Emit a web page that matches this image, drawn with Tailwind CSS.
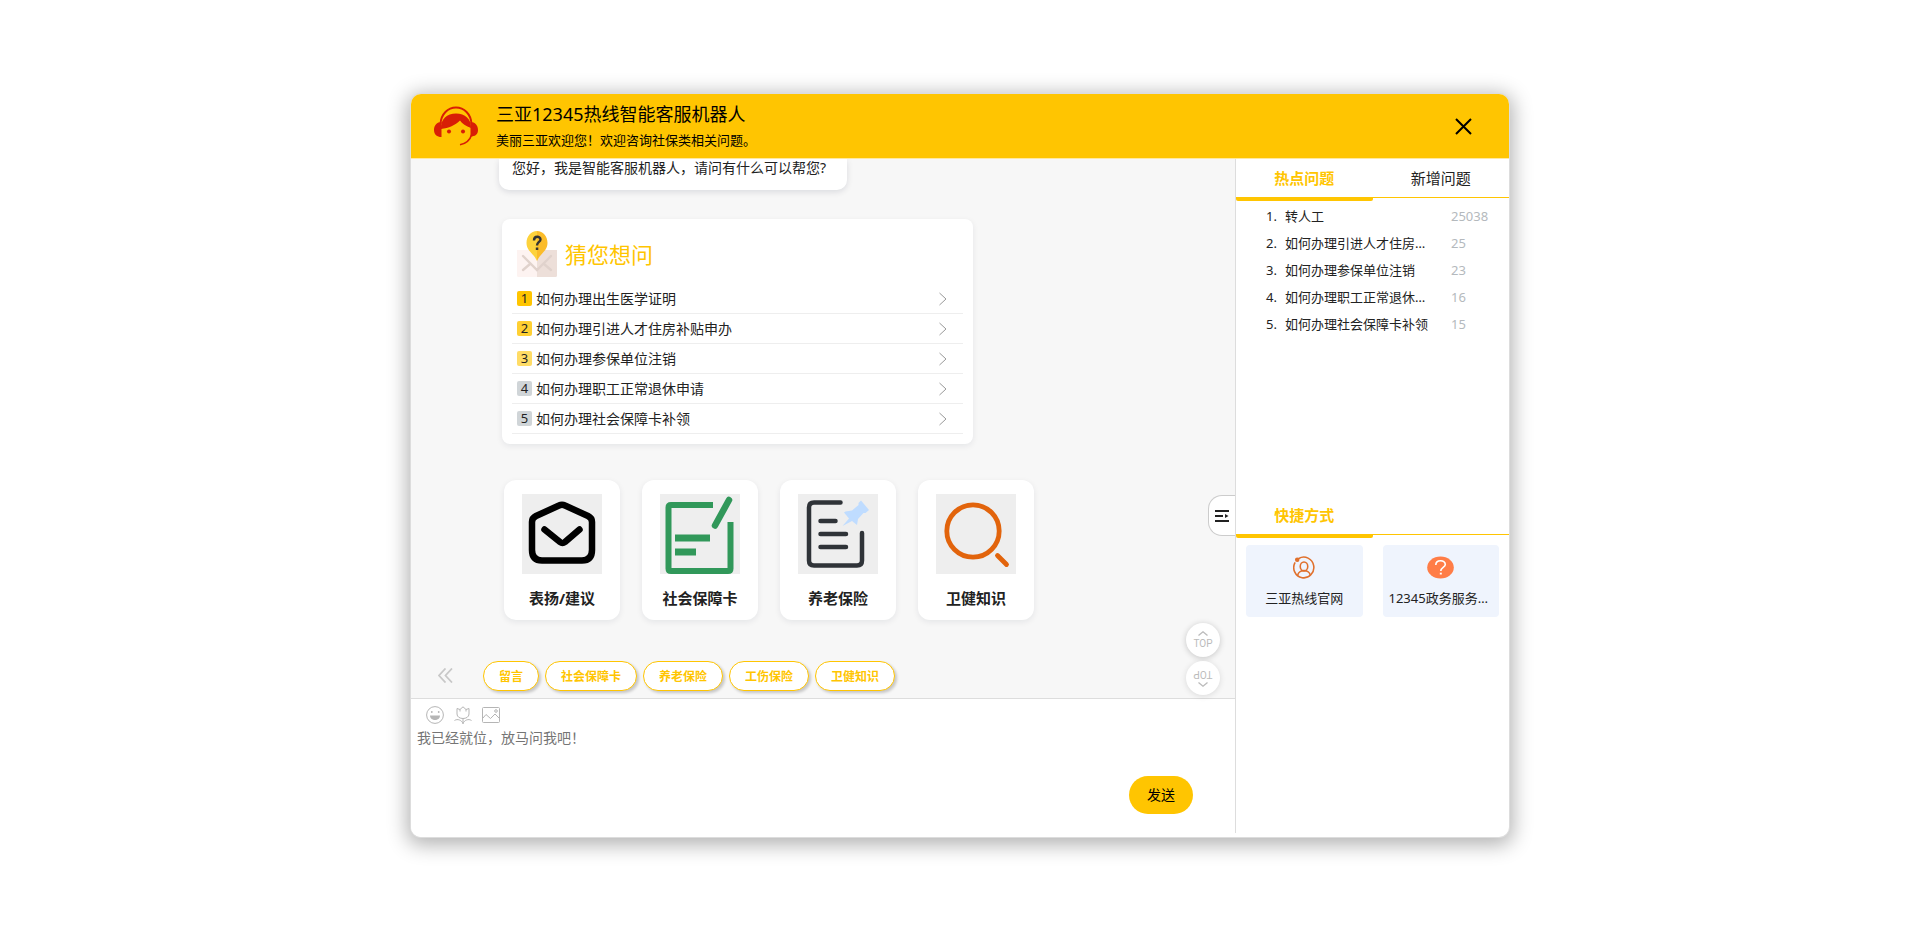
<!DOCTYPE html>
<html lang="zh-CN">
<head>
<meta charset="utf-8">
<title>三亚12345热线智能客服机器人</title>
<script src="https://cdn.jsdelivr.net/npm/@tailwindcss/browser@4"></script>
</head>
<body class="flex h-screen justify-center bg-white px-4 py-[94px] font-['Noto_Sans','Noto_Sans_CJK_SC',sans-serif] text-sm text-[#222]">
<div class="flex w-full max-w-[1098px] flex-col overflow-hidden rounded-[10px] bg-white shadow-[0_0_0_1px_#ddd,0_4px_20px_4px_rgba(0,0,0,0.3)]">

  <header class="flex h-16 shrink-0 items-center bg-[#ffc501] pl-[23px] text-black">
    <svg class="h-[40px] w-[44px] shrink-0" viewBox="0 0 44 40" fill="none" aria-hidden="true">
      <path d="M6.500 18C7 8 14 1.500 22 1.500S37 8 37.500 18" stroke="#d81e06" stroke-width="2"/>
      <path d="M7 23C6.500 13 13 7.500 22 7.500S37.500 13 37 22C32 20.500 28 17.500 26 14.500 21 19.500 15 22 7 23Z" fill="#d81e06"/>
      <path d="M7.500 16v15C3 31 0 28.500 0 24s3-8 7.500-8ZM36.500 16v14.500C41 30.500 44 28.500 44 24s-3-8-7.500-8Z" fill="#d81e06"/>
      <circle cx="15" cy="25.500" r="2" fill="#d81e06"/><circle cx="29" cy="25.500" r="2" fill="#d81e06"/>
      <path d="M37.500 29c-1.500 5-5.500 8.500-11.500 9.800" stroke="#d81e06" stroke-width="1.600"/>
    </svg>
    <div class="ml-[18px] flex-1">
      <h1 class="text-lg leading-7">三亚12345热线智能客服机器人</h1>
      <p class="text-[13px] leading-6">美丽三亚欢迎您！欢迎咨询社保类相关问题。</p>
    </div>
    <button class="mr-[37px] p-0" aria-label="关闭"><svg class="size-[17px]" viewBox="0 0 17 17" stroke="#000" stroke-width="2"><path d="M1 1l15 15M16 1L1 16"/></svg></button>
  </header>

  <div class="flex min-h-0 flex-1 border-t border-[#ffe9a0]">
    <main class="relative flex min-w-0 flex-1 flex-col">
      <div class="flex min-h-0 flex-1 flex-col items-start overflow-hidden bg-[#f7f7f7]">
        <div class="ml-[88px] rounded-b-[10px] bg-white pr-[21px] pb-[13px] pl-[13px] leading-[18px] shadow-[0_2px_6px_rgba(0,20,50,0.12)]">您好，我是智能客服机器人，请问有什么可以帮您?</div>

        <section class="mt-[29px] ml-[91px] w-[471px] rounded-lg bg-white px-2.5 pt-3 pb-2.5 shadow-[0_2px_6px_rgba(0,20,50,0.08)]">
          <div class="mb-[7px] flex items-center gap-2 pl-[5px]">
            <svg class="h-[46px] w-10" viewBox="0 0 40 46" fill="none" aria-hidden="true">
              <path d="M0 19h20v27H1.500Q0 46 0 44.500Z" fill="#fdf3f1"/><path d="M20 19h20v25.500q0 1.500-1.500 1.500H20Z" fill="#eddfd9"/>
              <path d="M6 25l14 14 14-14M6 39l7-6M34 39l-7-6" stroke="#e0d2cc" stroke-width="2.400" stroke-linecap="round"/>
              <path d="M20 0C14 0 9.500 5 9.500 12c0 8 7 10 10.500 18Z" fill="#fdd23c"/><path d="M20 0c6 0 10.500 5 10.500 12 0 8-7 10-10.500 18Z" fill="#fbbc2a"/>
              <path d="M17 9.500c0-5 6.500-4.500 6.500-1 0 2.500-3.500 2.500-3.500 6" stroke="#333" stroke-width="2.400"/><path d="M18.800 16.500h2.500v2.500h-2.500z" fill="#333"/>
            </svg>
            <h2 class="text-[22px] leading-8 text-[#ffc501]">猜您想问</h2>
          </div>
          <ul>
            <li class="border-b border-[#eee]"><button class="flex h-[29px] w-full items-center gap-1 pr-4 pl-[5px]"><span class="size-[15px] rounded-xs bg-[#ffc501] text-center text-[13px] leading-[15px]">1</span>如何办理出生医学证明<svg class="ml-auto h-[14px] w-2" viewBox="0 0 8 14" fill="none" stroke="#999"><path d="M.5 1l6.500 6-6.500 6"/></svg></button></li>
            <li class="border-b border-[#eee]"><button class="flex h-[29px] w-full items-center gap-1 pr-4 pl-[5px]"><span class="size-[15px] rounded-xs bg-[#ffd033] text-center text-[13px] leading-[15px]">2</span>如何办理引进人才住房补贴申办<svg class="ml-auto h-[14px] w-2" viewBox="0 0 8 14" fill="none" stroke="#999"><path d="M.5 1l6.500 6-6.500 6"/></svg></button></li>
            <li class="border-b border-[#eee]"><button class="flex h-[29px] w-full items-center gap-1 pr-4 pl-[5px]"><span class="size-[15px] rounded-xs bg-[#ffdc66] text-center text-[13px] leading-[15px]">3</span>如何办理参保单位注销<svg class="ml-auto h-[14px] w-2" viewBox="0 0 8 14" fill="none" stroke="#999"><path d="M.5 1l6.500 6-6.500 6"/></svg></button></li>
            <li class="border-b border-[#eee]"><button class="flex h-[29px] w-full items-center gap-1 pr-4 pl-[5px]"><span class="size-[15px] rounded-xs bg-[#d0d5d8] text-center text-[13px] leading-[15px]">4</span>如何办理职工正常退休申请<svg class="ml-auto h-[14px] w-2" viewBox="0 0 8 14" fill="none" stroke="#999"><path d="M.5 1l6.500 6-6.500 6"/></svg></button></li>
            <li class="border-b border-[#eee]"><button class="flex h-[29px] w-full items-center gap-1 pr-4 pl-[5px]"><span class="size-[15px] rounded-xs bg-[#d0d5d8] text-center text-[13px] leading-[15px]">5</span>如何办理社会保障卡补领<svg class="ml-auto h-[14px] w-2" viewBox="0 0 8 14" fill="none" stroke="#999"><path d="M.5 1l6.500 6-6.500 6"/></svg></button></li>
          </ul>
        </section>

        <div class="mt-9 ml-[93px] flex gap-[22px] text-[15px] leading-5 font-bold">
          <button class="flex h-[140px] w-[116px] flex-col items-center gap-[14px] rounded-xl bg-white pt-[14px] shadow-[0_2px_6px_rgba(0,20,50,0.08)]">
            <svg class="size-20 bg-[#eee]" viewBox="0 0 80 80" fill="none" stroke="#000" stroke-width="6.500" stroke-linecap="round" stroke-linejoin="round"><path d="M10 28Q10 24 14 22L37 11.500Q40 10 43 11.500L66 22Q70 24 70 28V56Q70 66.500 60 66.500H20Q10 66.500 10 56Z"/><path d="M22.500 35.500L38 48Q40.500 50 43 48L57.500 35.500"/></svg>
            表扬/建议
          </button>
          <button class="flex h-[140px] w-[116px] flex-col items-center gap-[14px] rounded-xl bg-white pt-[14px] shadow-[0_2px_6px_rgba(0,20,50,0.08)]">
            <svg class="size-20 bg-[#eee]" viewBox="0 0 80 80" fill="none" stroke="#31985a" stroke-width="6"><path d="M53 11H11Q8.500 11 8.500 13.500V74.500Q8.500 77 11 77H68Q70.500 77 70.500 74.500V28"/><path d="M15 44H50M15 58H36" stroke-width="7"/><path d="M55 31.500L69 6" stroke-linecap="round" stroke-width="6.500"/></svg>
            社会保障卡
          </button>
          <button class="flex h-[140px] w-[116px] flex-col items-center gap-[14px] rounded-xl bg-white pt-[14px] shadow-[0_2px_6px_rgba(0,20,50,0.08)]">
            <svg class="size-20 bg-[#eee]" viewBox="0 0 80 80" fill="none" stroke="#2f3338" stroke-width="4.500" stroke-linecap="round"><path d="M42.500 8.500H16Q11 8.500 11 13.500V66.500Q11 71.500 16 71.500H59Q64 71.500 64 66.500V39"/><path d="M22.500 27H37.500M22.500 40H48M22.500 53H48"/><path d="M63 6.500L71 16 67.500 19H65.500L60 25 59 31 54 27 44.500 32 51 24.500 46 18.500 47.500 17.500 54 16.500 60.500 11V9Z" fill="#bfdcff" stroke="none"/></svg>
            养老保险
          </button>
          <button class="flex h-[140px] w-[116px] flex-col items-center gap-[14px] rounded-xl bg-white pt-[14px] shadow-[0_2px_6px_rgba(0,20,50,0.08)]">
            <svg class="size-20 bg-[#eee]" viewBox="0 0 80 80" fill="none" stroke="#e2640c" stroke-width="4.800" stroke-linecap="round"><circle cx="37" cy="37" r="26.200"/><path d="M61.500 61.500L70.500 70.500"/></svg>
            卫健知识
          </button>
        </div>
      </div>

      <nav class="flex h-[45px] shrink-0 items-start bg-[#f7f7f7] pt-2 pl-[27px] text-xs font-bold text-[#ffc501]">
        <button class="mr-[30px] flex h-7 items-center" aria-label="收起"><svg class="size-[15px]" viewBox="0 0 15 15" fill="none" stroke="#c8c8c8" stroke-width="1.800"><path d="M7.500 .5l-6.500 7 6.500 7M14 .5l-6.500 7 6.500 7"/></svg></button>
        <div class="flex flex-1 gap-1.5">
          <button class="h-[30px] rounded-full border border-[#ffc501] bg-white px-[15px] pt-0.5 shadow-[2px_2px_3px_rgba(0,0,0,0.2)]">留言</button>
          <button class="h-[30px] rounded-full border border-[#ffc501] bg-white px-[15px] pt-0.5 shadow-[2px_2px_3px_rgba(0,0,0,0.2)]">社会保障卡</button>
          <button class="h-[30px] rounded-full border border-[#ffc501] bg-white px-[15px] pt-0.5 shadow-[2px_2px_3px_rgba(0,0,0,0.2)]">养老保险</button>
          <button class="h-[30px] rounded-full border border-[#ffc501] bg-white px-[15px] pt-0.5 shadow-[2px_2px_3px_rgba(0,0,0,0.2)]">工伤保险</button>
          <button class="h-[30px] rounded-full border border-[#ffc501] bg-white px-[15px] pt-0.5 shadow-[2px_2px_3px_rgba(0,0,0,0.2)]">卫健知识</button>
        </div>
      </nav>

      <form class="flex h-[139px] shrink-0 flex-col border-t border-[#ddd] bg-white">
        <div class="flex gap-2.5 pt-[7px] pl-[15px]">
          <button type="button" aria-label="表情"><svg class="size-[18px]" viewBox="0 0 18 18" fill="none" stroke="#b5b5b5"><circle cx="9" cy="9" r="8.400"/><path d="M4 9.500h10c0 6-10 6-10 0Z" fill="#b5b5b5" stroke="none"/><circle cx="5.800" cy="6" r=".9" fill="#b5b5b5" stroke="none"/><circle cx="12.700" cy="6" r=".9" fill="#b5b5b5" stroke="none"/></svg></button>
          <button type="button" aria-label="送花"><svg class="size-[18px]" viewBox="0 0 18 18" fill="none" stroke="#b5b5b5"><path d="M3 2.500l3 1L9 .8l3 2.700 3-1V8c0 6-12 6-12 0ZM6 3.500v2M12 3.500v2M9 12.500V18M.5 14.500c3-2 7-.5 8.500 3M17.500 14.500c-3-2-7-.5-8.500 3"/></svg></button>
          <button type="button" aria-label="图片"><svg class="size-[18px]" viewBox="0 0 18 18" fill="none" stroke="#b5b5b5"><rect x=".5" y="1.500" width="17" height="15" rx="1"/><circle cx="14" cy="5" r="1.300"/><path d="M1 12l3-3.500 4.500 4L13 8l4.500 4.500"/></svg></button>
        </div>
        <textarea class="mx-1.5 mt-1 min-h-0 flex-1 resize-none leading-5 outline-none placeholder:text-[#757575]" aria-label="输入问题" placeholder="我已经就位，放马问我吧！"></textarea>
        <button type="button" class="mr-[42px] mb-[23px] h-[38px] w-16 self-end rounded-full bg-[#ffc501] text-black">发送</button>
      </form>

      <button class="absolute top-[336px] right-0 flex h-[41px] w-[27px] items-center rounded-l-[14px] border border-r-0 border-[#ccc] bg-white pl-1.5" aria-label="收起侧栏"><svg class="h-3 w-[15px]" viewBox="0 0 15 12" stroke="#222" stroke-width="2"><path d="M0 1h14M0 6h8M0 11h14"/><path d="M10 4l3.500 2-3.500 2z" fill="#222" stroke="none"/></svg></button>
      <div class="absolute right-[15px] bottom-[142px] flex flex-col gap-1 font-['Roboto',sans-serif] text-[10px] leading-[10px] text-[#bbb]">
        <button class="flex size-[34px] flex-col items-center justify-center gap-[3px] rounded-full bg-white shadow-[0_1px_6px_rgba(0,0,0,0.2)]" aria-label="回到顶部"><svg class="h-[5px] w-[10px]" viewBox="0 0 10 5" fill="none" stroke="#bbb" stroke-width="1.300"><path d="M.5 4.500L5 .8l4.500 3.700"/></svg>TOP</button>
        <button class="flex size-[34px] rotate-180 flex-col items-center justify-center gap-[3px] rounded-full bg-white shadow-[0_-1px_6px_rgba(0,0,0,0.12)]" aria-label="回到底部"><svg class="h-[5px] w-[10px]" viewBox="0 0 10 5" fill="none" stroke="#bbb" stroke-width="1.300"><path d="M.5 4.500L5 .8l4.500 3.700"/></svg>TOP</button>
      </div>
    </main>

    <aside class="mb-1 w-[274px] shrink-0 border-l border-[#ddd]">
      <section class="h-[337px]">
        <div class="flex h-[39px] items-start border-b border-[#ffc501] text-[15px]">
          <button class="h-[42px] w-1/2 rounded-xs border-b-4 border-[#ffc501] pt-0.5 font-bold text-[#ffc501]">热点问题</button>
          <button class="h-[38px] w-1/2 pt-0.5">新增问题</button>
        </div>
        <ol class="pt-[5px] pl-[30px] text-[13px] leading-[27px]">
          <li class="flex"><span class="w-[19px]">1.</span><a href="#" class="w-[146px] truncate">转人工</a><span class="ml-5 text-[#b4b9bd]">25038</span></li>
          <li class="flex"><span class="w-[19px]">2.</span><a href="#" class="w-[146px] truncate">如何办理引进人才住房补贴申办</a><span class="ml-5 text-[#b4b9bd]">25</span></li>
          <li class="flex"><span class="w-[19px]">3.</span><a href="#" class="w-[146px] truncate">如何办理参保单位注销</a><span class="ml-5 text-[#b4b9bd]">23</span></li>
          <li class="flex"><span class="w-[19px]">4.</span><a href="#" class="w-[146px] truncate">如何办理职工正常退休申请</a><span class="ml-5 text-[#b4b9bd]">16</span></li>
          <li class="flex"><span class="w-[19px]">5.</span><a href="#" class="w-[146px] truncate">如何办理社会保障卡补领</a><span class="ml-5 text-[#b4b9bd]">15</span></li>
        </ol>
      </section>
      <section>
        <div class="flex h-[39px] items-start border-b border-[#ffc501] text-[15px]">
          <button class="h-[42px] w-1/2 rounded-xs border-b-4 border-[#ffc501] pt-0.5 font-bold text-[#ffc501]">快捷方式</button>
        </div>
        <div class="grid grid-cols-2 gap-5 px-2.5 pt-2.5 text-[13px] leading-5">
          <a href="#" class="flex h-[72px] flex-col items-center rounded bg-[#eff4fd] px-1.5 pt-[11px]">
            <svg class="h-[23px] w-[22px]" viewBox="0 0 21 22" fill="none" stroke="#e0702c" stroke-width="1.500"><path d="M5.500 2.400A9.600 9.900 0 1 1 2 6"/><circle cx="4" cy="3.500" r="1.400" fill="#e0702c"/><ellipse cx="10.500" cy="10" rx="3.600" ry="4.200"/><path d="M4.500 18.500c.5-6 11.500-6 12 0"/></svg>
            <span class="mt-[9px] max-w-full truncate">三亚热线官网</span>
          </a>
          <a href="#" class="flex h-[72px] flex-col items-center rounded bg-[#eff4fd] px-1.5 pt-[11px]">
            <svg class="h-[23px] w-[27px]" viewBox="0 0 27 23" fill="none"><ellipse cx="13.500" cy="11.500" rx="13.300" ry="11" fill="#ff7d47"/><path d="M8.800 9c0-5.500 9.500-5.500 9.500-.5 0 3-4.500 3-4.500 6.500" stroke="#fff" stroke-width="1.600"/><path d="M12.800 16.700h2v1.800h-2z" fill="#fff"/></svg>
            <span class="mt-[9px] max-w-full truncate">12345政务服务热线</span>
          </a>
        </div>
      </section>
    </aside>
  </div>
</div>
</body>
</html>
